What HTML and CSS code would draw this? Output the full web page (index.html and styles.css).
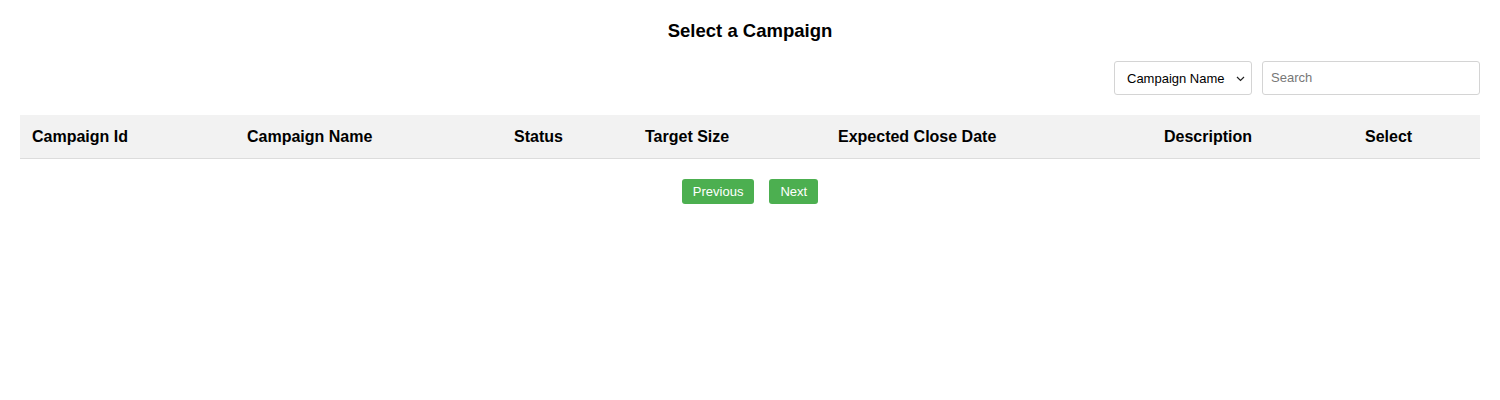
FILE: index.html
```html
<!DOCTYPE html>
<html>
<head>
<meta charset="utf-8">
<title>Select a Campaign</title>
<link rel="stylesheet" href="styles.css">
</head>
<body>
<div class="page">
  <h2 class="title">Select a Campaign</h2>
  <div class="controls">
    <div class="select-box">
      <span class="select-label">Campaign Name</span>
      <svg class="chev" width="9" height="6" viewBox="0 0 9 6"><path d="M1 1 L4.5 4.5 L8 1" fill="none" stroke="#222" stroke-width="1.2"/></svg>
    </div>
    <div class="search-box"><span class="placeholder">Search</span></div>
  </div>
  <table class="grid">
    <thead>
      <tr>
        <th class="c1">Campaign Id</th>
        <th class="c2">Campaign Name</th>
        <th class="c3">Status</th>
        <th class="c4">Target Size</th>
        <th class="c5">Expected Close Date</th>
        <th class="c6">Description</th>
        <th class="c7">Select</th>
      </tr>
    </thead>
    <tbody></tbody>
  </table>
  <div class="pager">
    <button class="btn">Previous</button>
    <button class="btn">Next</button>
  </div>
</div>
</body>
</html>
```
FILE: styles.css
```css
* { box-sizing: border-box; }
html, body { margin: 0; padding: 0; background: #fff; }
body { font-family: "Liberation Sans", Arial, sans-serif; color: #000; }
.page { padding: 20px; }
.title {
  margin: 0;
  font-size: 18.5px;
  line-height: 22px;
  font-weight: bold;
  text-align: center;
}
.controls {
  display: flex;
  justify-content: flex-end;
  gap: 10px;
  margin-top: 19px;
}
.select-box {
  width: 138px;
  height: 34px;
  border: 1px solid #d4d4d4;
  border-radius: 3px;
  display: flex;
  align-items: center;
  justify-content: space-between;
  padding: 0 6px 0 12px;
  font-size: 13px;
}
.chev { margin-top: 1px; }
.search-box {
  width: 218px;
  height: 34px;
  border: 1px solid #d4d4d4;
  border-radius: 3px;
  display: flex;
  align-items: center;
  padding: 0 8px 2px;
  font-size: 13px;
}
.placeholder { color: #777; }
.grid {
  width: 100%;
  margin-top: 20px;
  border-collapse: collapse;
  table-layout: fixed;
}
.grid th {
  background: #f2f2f2;
  height: 43px;
  padding: 2px 12px 0;
  text-align: left;
  font-size: 16px;
  font-weight: bold;
  border-bottom: 1px solid #dcdcdc;
}
.c1 { width: 215px; }
.c2 { width: 267px; }
.c3 { width: 131px; }
.c4 { width: 193px; }
.c5 { width: 326px; }
.c6 { width: 201px; }
.c7 { width: 127px; }
.pager {
  display: flex;
  justify-content: center;
  gap: 15px;
  margin-top: 20px;
}
.btn {
  background: #4caf50;
  color: #fff;
  border: none;
  border-radius: 3px;
  height: 25px;
  padding: 0 11px;
  font-family: "Liberation Sans", Arial, sans-serif;
  font-size: 13px;
  cursor: pointer;
}
```
